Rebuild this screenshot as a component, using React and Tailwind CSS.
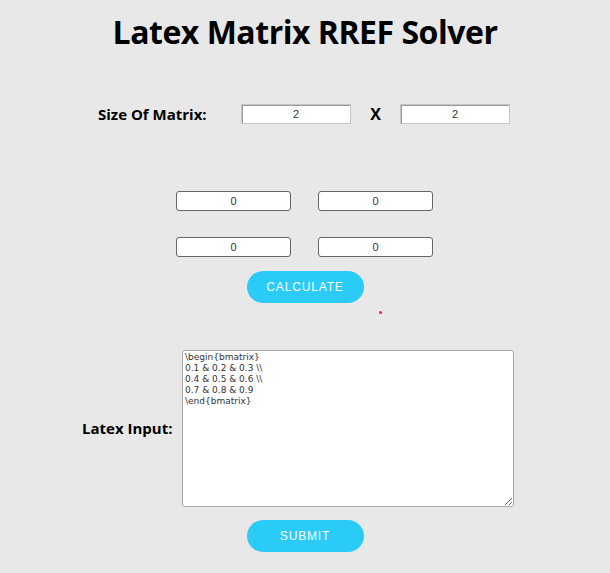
import { useState } from 'react';

export default function App() {
  const [rows, setRows] = useState('2');
  const [cols, setCols] = useState('2');
  const [cells, setCells] = useState(['0', '0', '0', '0']);
  const [latex, setLatex] = useState(
    '\\begin{bmatrix}\n0.1 & 0.2 & 0.3 \\\\\n0.4 & 0.5 & 0.6 \\\\\n0.7 & 0.8 & 0.9\n\\end{bmatrix}'
  );

  const sizeCls = "w-[110px] h-5 bg-white border border-[#c4c4c4] shadow-[inset_1px_1px_0_#9a9a9a] text-center text-[11px] text-[#333] outline-none font-['Liberation_Sans',sans-serif]";
  const cellCls = "w-[115px] h-5 bg-white border border-[#666] rounded-[3px] text-center text-[11px] text-[#333] outline-none font-['Liberation_Sans',sans-serif]";
  const btnCls = "w-[117px] h-8 rounded-full bg-[#2bcbf8] text-white text-[12px] tracking-[0.07em] font-['Liberation_Sans',sans-serif]";

  const setCell = (i, v) => {
    const next = [...cells];
    next[i] = v;
    setCells(next);
  };

  return (
    <div className="min-h-[573px] bg-[#e8e8e8] font-['Open_Sans',sans-serif] text-black">
      <h1 className="pt-[12px] text-center text-[32px] font-bold leading-[40px] tracking-[-0.015em]">
        Latex Matrix RREF Solver
      </h1>

      {/* Size row */}
      <div className="mt-[50px] flex items-center">
        <span className="ml-[98px] w-[143px] text-[15px] font-bold">Size Of Matrix:</span>
        <input className={sizeCls} value={rows} onChange={(e) => setRows(e.target.value)} />
        <span className="w-[49px] text-center text-[16px] font-bold">X</span>
        <input className={sizeCls} value={cols} onChange={(e) => setCols(e.target.value)} />
      </div>

      {/* Matrix cells */}
      <div className="mt-[65px] ml-[176px] grid grid-cols-[115px_115px] gap-x-[27px] gap-y-[26px]">
        {cells.map((c, i) => (
          <input key={i} className={cellCls} value={c} onChange={(e) => setCell(i, e.target.value)} />
        ))}
      </div>

      <div className="relative mt-[14px] flex justify-center">
        <button className={btnCls}>CALCULATE</button>
        <span className="absolute left-[379px] top-[40px] w-[3px] h-[3px] rounded-full bg-[#f0204a]" />
      </div>

      {/* Latex input */}
      <div className="mt-[47px] flex items-center">
        <span className="ml-[82px] w-[100px] text-[15px] font-bold">Latex Input:</span>
        <textarea
          className="w-[332px] h-[157px] bg-white border border-[#a9a9a9] rounded-[3px] px-[2px] py-[1px] text-[9px] leading-[11px] text-[#333] outline-none font-['DejaVu_Sans',sans-serif]"
          value={latex}
          onChange={(e) => setLatex(e.target.value)}
        />
      </div>

      <div className="mt-[13px] flex justify-center">
        <button className={btnCls}>SUBMIT</button>
      </div>
    </div>
  );
}
